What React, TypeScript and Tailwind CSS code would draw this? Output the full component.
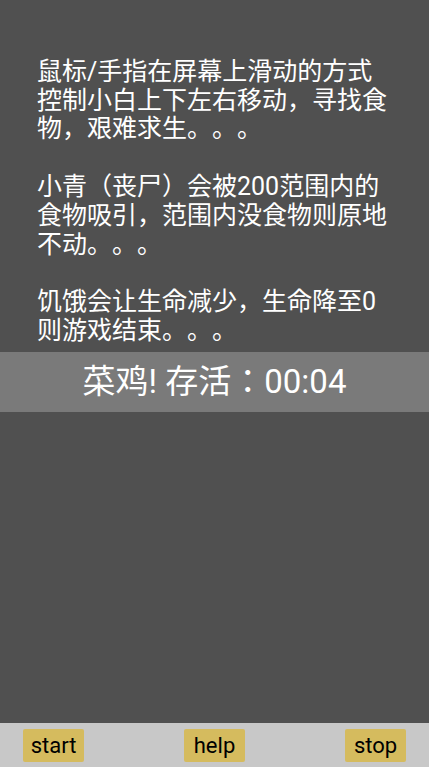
const PARAGRAPHS: string[][] = [
  ["鼠标/手指在屏幕上滑动的方式", "控制小白上下左右移动，寻找食", "物，艰难求生。。。"],
  ["小青（丧尸）会被200范围内的", "食物吸引，范围内没食物则原地", "不动。。。"],
  ["饥饿会让生命减少，生命降至0", "则游戏结束。。。"],
];

const BUTTONS = ["start", "help", "stop"];

export default function App() {
  return (
    <div
      className="flex h-[767px] w-[429px] flex-col bg-[#505050] text-white [text-spacing-trim:space-all]"
      style={{ fontFamily: 'Roboto, "Noto Sans CJK KR", "Noto Sans CJK SC", sans-serif' }}
    >
      <div className="flex flex-col gap-[29px] px-[37px] pt-[58px] text-[25px] leading-[28.7px]">
        {PARAGRAPHS.map((lines, i) => (
          <p key={i} className="whitespace-nowrap">
            {lines.map((line, j) => (
              <span key={j} className="block">
                {line}
              </span>
            ))}
          </p>
        ))}
      </div>

      <div className="mt-[6px] flex h-[60px] items-center justify-center bg-[#7a7a7a] text-[33px]">
        菜鸡! 存活：00:04
      </div>

      <div className="flex-1" />

      <div className="flex h-[44px] items-center justify-between bg-[#c8c8c8] px-[23px]">
        {BUTTONS.map((label) => (
          <button
            key={label}
            className="flex h-[33px] w-[61px] items-center justify-center rounded-[2px] bg-[#d5bb5e] text-[22px] text-black"
          >
            {label}
          </button>
        ))}
      </div>
    </div>
  );
}
